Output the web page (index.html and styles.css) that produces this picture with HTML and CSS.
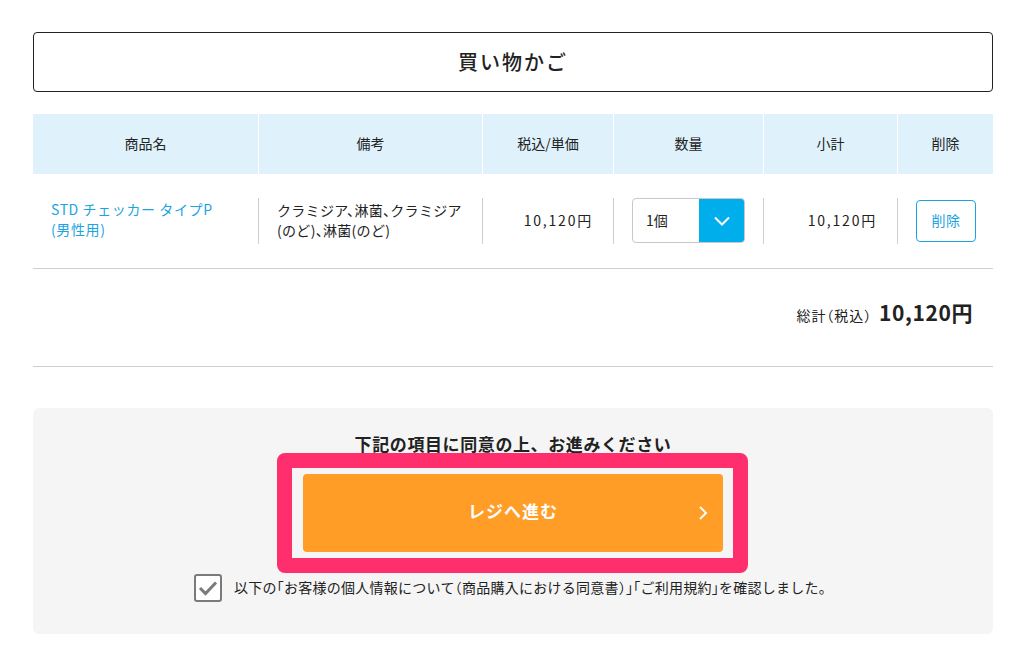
FILE: index.html
```html
<!DOCTYPE html>
<html lang="ja">
<head>
<meta charset="utf-8">
<link rel="stylesheet" href="styles.css">
</head>
<body>
<div class="page">
  <h1 class="title">買い物かご</h1>

  <div class="cart-grid cart-head">
    <div class="hcell">商品名</div>
    <div class="hcell">備考</div>
    <div class="hcell">税込/単価</div>
    <div class="hcell">数量</div>
    <div class="hcell">小計</div>
    <div class="hcell">削除</div>
  </div>

  <div class="cart-grid cart-row">
    <div class="cell cell-name"><a class="prod-link">STD チェッカー タイプP<br>(男性用)</a></div>
    <div class="cell cell-note">クラミジア、淋菌、クラミジア<br>(のど)、淋菌(のど)</div>
    <div class="cell cell-price">10,120円</div>
    <div class="cell cell-qty">
      <div class="qty-select">
        <span class="qty-value">1個</span>
        <span class="qty-arrow">
          <svg width="18" height="12" viewBox="0 0 18 12"><path d="M2 2.5 L9 9.5 L16 2.5" fill="none" stroke="#fff" stroke-width="2"/></svg>
        </span>
      </div>
    </div>
    <div class="cell cell-price">10,120円</div>
    <div class="cell cell-del"><button class="del-btn">削除</button></div>
  </div>

  <div class="total-row">
    <span class="total-label">総計（税込）</span>
    <span class="total-value">10,120円</span>
  </div>

  <div class="agree-panel">
    <p class="agree-heading">下記の項目に同意の上、お進みください</p>
    <div class="highlight">
      <button class="checkout-btn">
        <span class="checkout-text">レジへ進む</span>
        <svg class="checkout-chevron" width="10" height="16" viewBox="0 0 10 16"><path d="M2 2 L8 8 L2 14" fill="none" stroke="#fff" stroke-width="2"/></svg>
      </button>
    </div>
    <label class="agree-check">
      <span class="checkbox">
        <svg width="22" height="18" viewBox="0 0 22 18"><path d="M3 9 L8.5 14.5 L19 3.5" fill="none" stroke="#7a7a7a" stroke-width="3"/></svg>
      </span>
      <span class="agree-text">以下の「お客様の個人情報について（商品購入における同意書）」「ご利用規約」を確認しました。</span>
    </label>
  </div>
</div>
</body>
</html>
```

FILE: styles.css
```css
* { box-sizing: border-box; }
html, body { margin: 0; padding: 0; background: #fff; }
body {
  font-family: "Noto Sans CJK JP", "Noto Sans", sans-serif;
  color: #222;
  font-size: 14px;
}
.page {
  width: 960px;
  margin: 0 0 0 33px;
  padding-top: 32px;
}
.title {
  margin: 0;
  height: 60px;
  border: 1px solid #222;
  border-radius: 4px;
  display: flex;
  align-items: center;
  justify-content: center;
  font-size: 20px;
  font-weight: 500;
  letter-spacing: 2px;
  padding-bottom: 1px;
}
.cart-grid {
  display: grid;
  grid-template-columns: 225px 224px 131px 150px 134px 96px;
}
.cart-head {
  margin-top: 22px;
  height: 60px;
  background: #dff2fc;
}
.hcell {
  display: flex;
  align-items: center;
  justify-content: center;
  font-size: 14px;
  color: #222;
  padding-bottom: 3px;
}
.hcell + .hcell { border-left: 1px solid #fff; }
.cart-row {
  height: 95px;
  align-items: center;
  border-bottom: 1px solid #cfcfcf;
  padding-bottom: 1px;
}
.cell {
  height: 46px;
  display: flex;
  align-items: center;
  line-height: 20px;
  font-size: 14px;
}
.cell + .cell { border-left: 1px solid #cfcfcf; }
.cell-name { padding-left: 18px; padding-bottom: 3px; }
.prod-link { color: #1ca4e0; letter-spacing: 0.6px; }
.cell-note {
  padding-left: 18px;
  padding-bottom: 2px;
  font-feature-settings: "halt";
  letter-spacing: 0.3px;
}
.cell-price {
  justify-content: flex-end;
  padding-right: 20px;
  padding-bottom: 2px;
  letter-spacing: 1.8px;
}
.cell-qty { padding-left: 18px; }
.qty-select {
  display: flex;
  width: 113px;
  height: 45px;
  border: 1px solid #c8c8c8;
  border-radius: 4px;
  overflow: hidden;
}
.qty-value {
  flex: 1;
  display: flex;
  align-items: center;
  padding-left: 13px;
  padding-bottom: 2px;
}
.qty-arrow {
  width: 46px;
  background: #00aeeb;
  display: flex;
  align-items: center;
  justify-content: center;
  margin: -1px -1px -1px 0;
}
.cell-del { padding-left: 18px; }
.del-btn {
  width: 60px;
  height: 42px;
  border: 1px solid #1ca4e0;
  border-radius: 4px;
  background: #fff;
  color: #1ca4e0;
  font-family: inherit;
  font-size: 14px;
  padding: 0 0 2px;
  letter-spacing: 0.5px;
}
.total-row {
  height: 98px;
  display: flex;
  justify-content: flex-end;
  align-items: baseline;
  padding: 28px 20px 0 0;
  border-bottom: 1px solid #cfcfcf;
}
.total-label {
  font-size: 14px;
  margin-right: 7px;
  font-feature-settings: "halt";
  letter-spacing: 0.9px;
}
.total-value { font-size: 21px; font-weight: 700; letter-spacing: 0.6px; }
.agree-panel {
  margin-top: 41px;
  height: 226px;
  background: #f5f5f5;
  border-radius: 6px;
  display: flex;
  flex-direction: column;
  align-items: center;
  padding-top: 25px;
}
.agree-heading {
  margin: 0;
  font-size: 17px;
  font-weight: 700;
  line-height: 22px;
  letter-spacing: 0.6px;
}
.highlight {
  position: relative;
  margin-top: 19px;
}
.highlight::before {
  content: "";
  position: absolute;
  top: -21px;
  bottom: -21px;
  left: -26px;
  right: -25px;
  border: 15px solid #ff2f6d;
  border-radius: 8px;
}
.checkout-btn {
  position: relative;
  width: 420px;
  height: 78px;
  background: #ff9d26;
  border: none;
  border-radius: 4px;
  color: #fff;
  font-family: inherit;
  font-size: 17px;
  font-weight: 700;
  display: flex;
  align-items: center;
  justify-content: center;
  padding: 0 0 5px;
  letter-spacing: 1px;
}
.checkout-chevron {
  position: absolute;
  right: 15px;
  top: 31px;
}
.agree-check {
  margin-top: 22px;
  display: flex;
  align-items: center;
  gap: 12px;
  margin-left: -6px;
}
.checkbox {
  width: 28px;
  height: 28px;
  border: 2px solid #7a7a7a;
  border-radius: 3px;
  background: #fff;
  display: flex;
  align-items: center;
  justify-content: center;
}
.agree-text {
  font-size: 14px;
  letter-spacing: 0.25px;
  font-feature-settings: "halt";
  padding-bottom: 2px;
}
```
